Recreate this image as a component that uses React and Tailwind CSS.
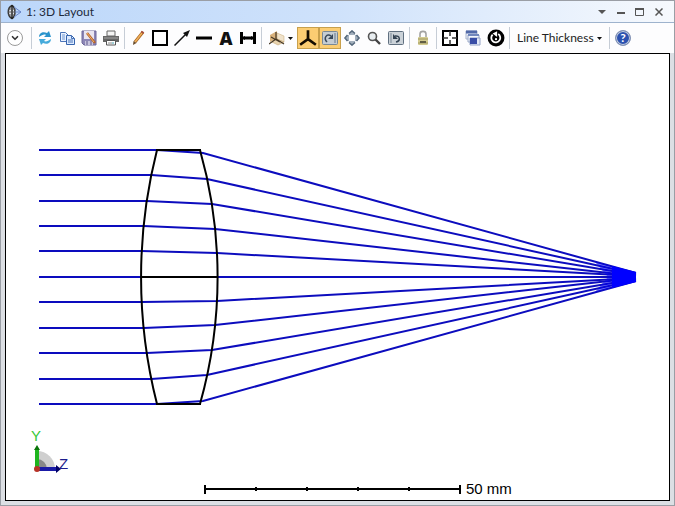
import { ChevronDown } from 'lucide-react';

const FONT = "font-['Lato','Open_Sans',sans-serif]";

const CENTER_Y = 277;

// height at the front surface, exit point on the back surface, height at the image plane
const rays = [
  { y: 150, exit: [203, 153], end: 273 },
  { y: 175, exit: [207, 179], end: 274 },
  { y: 201, exit: [212, 204], end: 275 },
  { y: 226, exit: [215, 229], end: 276 },
  { y: 251, exit: [217, 253], end: 276 },
  { y: 277, exit: [218, 277], end: 277 },
  { y: 302, exit: [217, 301], end: 278 },
  { y: 328, exit: [215, 325], end: 278 },
  { y: 353, exit: [212, 350], end: 279 },
  { y: 379, exit: [207, 375], end: 280 },
  { y: 404, exit: [203, 401], end: 281 },
];

const frontX = (y) => 141 + 16 * ((y - CENTER_Y) / 127) ** 2;

const Icon = ({ children, size = 'size-4' }) => (
  <svg viewBox="0 0 16 16" className={`${size} shrink-0`} fill="none" aria-hidden="true">
    {children}
  </svg>
);

const LensIcon = () => (
  <Icon>
    <path d="M5 1.500C0 4 0 12 5 14.500C9 12 9 4 5 1.500Z" fill="#e2e6ee" stroke="#333" strokeWidth="1.500" />
    <path d="M5 1V15" stroke="#222" strokeWidth="1.500" />
    <path d="M1 5H8M1 8H8M1 11H8" stroke="#555" />
    <path d="M7 3L14 8L7 13M8 8H14" stroke="#6a86c8" />
  </Icon>
);

const RefreshIcon = () => (
  <Icon>
    <path d="M2 7C2 3 6 1 10 3L12 1L14 7L7 7L9 5C7 4 5 5 2 7Z" fill="#2a93cc" />
    <path d="M14 9C14 13 10 15 6 13L4 15L2 9L9 9L7 11C9 12 11 11 14 9Z" fill="#45aadb" />
  </Icon>
);

const CopyIcon = () => (
  <Icon>
    <path d="M1.500 2.500H6.500L9.500 5.500V11.500H1.500Z" fill="#eaf2ff" stroke="#4b74b8" />
    <path d="M3 5H6M3 7H6M3 9H6" stroke="#6f95d0" />
    <path d="M7.500 5.500H12.500L15.500 8.500V14.500H7.500Z" fill="#dceaff" stroke="#3563ad" />
    <path d="M12.500 5.500V8.500H15.500M9 10H14M9 12H14" stroke="#4b74b8" />
  </Icon>
);

const SaveIcon = () => (
  <Icon>
    <path d="M1 1H15V15H3L1 13Z" fill="#8c86b6" stroke="#6d6799" />
    <path d="M3 1H13V9H3Z" fill="#e9e5f0" />
    <path d="M4 11H12V15H4Z" fill="#c8c4dd" />
    <path d="M6 11V15M10 11V15" stroke="#5b5588" />
    <path d="M6 3L14 13" stroke="#b5642d" strokeWidth="2.500" />
    <path d="M6 3L13 12" stroke="#f0b266" />
  </Icon>
);

const PrintIcon = () => (
  <Icon>
    <path d="M4 1H12V6H4Z" fill="#f4f4f4" stroke="#666" />
    <path d="M0 6H16V12H0Z" fill="#666" />
    <path d="M1 8H15" stroke="#a5a5a5" />
    <path d="M3.500 10.500H12.500V15H3.500Z" fill="#fff" stroke="#555" />
    <path d="M5 13H9" stroke="#888" />
    <path d="M9 13H11" stroke="#3f9fb0" />
  </Icon>
);

const PencilIcon = () => (
  <Icon>
    <path d="M5 12L13 2" stroke="#a8641f" strokeWidth="3" />
    <path d="M5 12L12 3" stroke="#efb15c" strokeWidth="1.500" />
    <path d="M12 3L13 1.500" stroke="#a9503e" strokeWidth="3" />
    <path d="M3 15L3.500 11L6.500 13Z" fill="#6b5030" />
  </Icon>
);

const RectIcon = () => (
  <Icon>
    <path d="M1 1H15V15H1Z" fill="#fff" stroke="#000" strokeWidth="2" />
  </Icon>
);

const ArrowIcon = () => (
  <Icon>
    <path d="M0.500 15.500L12 4" stroke="#111" strokeWidth="1.500" />
    <path d="M16 0L9 3L13 7Z" fill="#111" />
  </Icon>
);

const LineIcon = () => (
  <Icon>
    <path d="M0 8H16" stroke="#000" strokeWidth="3" />
  </Icon>
);

const DimensionIcon = () => (
  <Icon>
    <path d="M1.500 2V14M14.500 2V14" stroke="#000" strokeWidth="3" />
    <path d="M1 8H15" stroke="#000" strokeWidth="3" />
    <path d="M2 8L5 6V10ZM14 8L11 6V10Z" fill="#000" />
  </Icon>
);

const OrientIcon = () => (
  <Icon>
    <path d="M1 5L8 1V9L1 12Z" fill="#d9b27c" />
    <path d="M8 3L15 6V12L8 9Z" fill="#efe2cb" stroke="#c7a670" strokeWidth="0.500" />
    <path d="M3 12L8 9L15 12L9 15Z" fill="#e9d4af" stroke="#bc9a62" strokeWidth="0.500" />
    <path d="M7 2V9L0 14M7 9L15 14M2 7L11 12" stroke="#453826" strokeWidth="1.200" />
  </Icon>
);

const TripodIcon = () => (
  <Icon size="size-[18px]">
    <path d="M8 1V9L1 14M8 9L15 14" stroke="#160d00" strokeWidth="2.400" />
  </Icon>
);

const RotateViewIcon = () => (
  <Icon>
    <rect x="0.500" y="1.500" width="15" height="13" rx="1" fill="#c5ccd2" stroke="#798895" />
    <path d="M5 12C1 8 5 3 9 6" stroke="#39485a" strokeWidth="1.500" />
    <path d="M11 4V9H6Z" fill="#39485a" />
    <path d="M13 3V13" stroke="#667688" />
  </Icon>
);

const MoveIcon = () => (
  <Icon>
    <path
      d="M8 0L11 3V5H5V3ZM8 16L5 13V11H11V13ZM0 8L3 5H5V11H3ZM16 8L13 11H11V5H13Z"
      fill="#a3b0bd"
    />
    <path d="M5 3.500L8 1L11 3.500M5 12.500L8 15L11 12.500M3.500 5L1 8L3.500 11M12.500 5L15 8L12.500 11" stroke="#56697c" strokeWidth="1.500" />
    <path d="M6 6H10V10H6Z" fill="#fff" />
  </Icon>
);

const ZoomIcon = () => (
  <Icon>
    <circle cx="6.500" cy="6.500" r="4" fill="#e8edf0" stroke="#555" strokeWidth="1.600" />
    <path d="M9.500 9.500L14 14" stroke="#444" strokeWidth="2.400" />
  </Icon>
);

const UndoViewIcon = () => (
  <Icon>
    <rect x="0.500" y="1.500" width="15" height="13" rx="1" fill="#cbd2d8" stroke="#607080" />
    <path d="M8 12C13 11 12 5 7 6" stroke="#344454" strokeWidth="1.500" />
    <path d="M5 4V9H10Z" fill="#344454" />
    <path d="M3 3V13" stroke="#7b8997" />
  </Icon>
);

const LockIcon = () => (
  <Icon>
    <path d="M5 8V4C5 0.500 11 0.500 11 4V8" stroke="#a3a3a3" strokeWidth="1.600" />
    <rect x="3" y="7" width="10" height="8" rx="1" fill="#d3cb90" />
    <path d="M3 9H13M3 13H13" stroke="#a29a62" />
    <path d="M5 11H11V13H5Z" fill="#615e45" />
  </Icon>
);

const FitIcon = () => (
  <Icon>
    <path d="M1 1H15V15H1Z" fill="#fff" stroke="#000" strokeWidth="2" />
    <path d="M8 1V6M8 10V15M1 8H6M10 8H15" stroke="#333" strokeWidth="1.500" />
  </Icon>
);

const WindowsIcon = () => (
  <Icon>
    <path d="M1 1H12V9H1Z" fill="#edf1fa" stroke="#a7b3cc" />
    <path d="M1 2H12" stroke="#5068a8" strokeWidth="3" />
    <path d="M3 5H14V12H3Z" fill="#f2f5fc" stroke="#98a7c7" />
    <path d="M3 5H14" stroke="#7187bd" strokeWidth="2" />
    <path d="M5 8H15V15H5Z" fill="#e3e9f8" stroke="#93a2c6" />
    <path d="M5 8H12V14H5Z" fill="#394da6" />
  </Icon>
);

const ResetIcon = () => (
  <Icon size="size-[18px]">
    <circle cx="8" cy="8" r="7.500" fill="#000" />
    <path d="M10 4.500A4 4 0 1 1 5 5" stroke="#fff" strokeWidth="1.600" />
    <path d="M9 2L9 7L5 4Z" fill="#fff" />
    <circle cx="8" cy="9" r="1" fill="#fff" />
  </Icon>
);

const Caret = () => (
  <svg viewBox="0 0 5 3" className="h-[3px] w-[5px] shrink-0" aria-hidden="true">
    <path d="M0 0H5L2.500 3Z" fill="#111" />
  </svg>
);

const ToolButton = ({ label, active = false, children }) => (
  <button
    type="button"
    aria-label={label}
    aria-pressed={active || undefined}
    className={`flex h-[22px] w-[22px] shrink-0 items-center justify-center ${
      active ? 'border border-[#c8a04c] bg-[#fccd72]' : ''
    }`}
  >
    {children}
  </button>
);

const Separator = () => <div className="mx-0.5 h-[22px] w-px shrink-0 bg-[#c6cdd6]" />;

const TitleBar = () => (
  <header className="flex h-[22px] shrink-0 items-center justify-between border-b border-[#9eb3cd] bg-linear-to-r from-[#bcd7fa] via-[#cfe2fb] to-[#f6f9fd] pr-1.5 pl-1.5">
    <div className="flex items-center gap-[3px]">
      <LensIcon />
      <h1 className="text-xs leading-4 text-[#1e2a3c]">1: 3D Layout</h1>
    </div>
    <div className="flex items-center text-[#555]">
      <button type="button" aria-label="Window menu" className="flex w-[19px] justify-center">
        <svg viewBox="0 0 8 4" className="h-1 w-2">
          <path d="M0 0H8L4 4Z" fill="currentColor" />
        </svg>
      </button>
      <button type="button" aria-label="Minimize" className="flex w-[19px] justify-center">
        <svg viewBox="0 0 8 8" className="size-2">
          <path d="M0 5H8" stroke="currentColor" strokeWidth="2" />
        </svg>
      </button>
      <button type="button" aria-label="Maximize" className="flex w-[19px] justify-center">
        <svg viewBox="0 0 9 8" className="h-2 w-[9px]" fill="none">
          <path d="M0.500 1V7.500H8.500V1" stroke="currentColor" />
          <path d="M0 1H9" stroke="currentColor" strokeWidth="2" />
        </svg>
      </button>
      <button type="button" aria-label="Close" className="flex w-[19px] justify-center">
        <svg viewBox="0 0 8 8" className="size-2">
          <path d="M0.500 0.500L7.500 7.500M7.500 0.500L0.500 7.500" stroke="currentColor" strokeWidth="1.500" />
        </svg>
      </button>
    </div>
  </header>
);

const Toolbar = () => (
  <div role="toolbar" aria-label="Layout tools" className="flex h-[30px] shrink-0 items-center bg-[#fdfdfe] pl-[3px]">
    <button type="button" aria-label="Settings" className="mr-[3px] flex h-[22px] w-[22px] shrink-0 items-center justify-center">
      <span className="flex size-4 items-center justify-center rounded-full border border-[#9a9a9a] bg-white">
        <ChevronDown className="size-2.5 text-[#333]" strokeWidth={4} />
      </span>
    </button>
    <Separator />
    <ToolButton label="Update"><RefreshIcon /></ToolButton>
    <ToolButton label="Copy"><CopyIcon /></ToolButton>
    <ToolButton label="Save as"><SaveIcon /></ToolButton>
    <ToolButton label="Print"><PrintIcon /></ToolButton>
    <Separator />
    <ToolButton label="Annotate"><PencilIcon /></ToolButton>
    <ToolButton label="Rectangle"><RectIcon /></ToolButton>
    <ToolButton label="Arrow"><ArrowIcon /></ToolButton>
    <ToolButton label="Line"><LineIcon /></ToolButton>
    <ToolButton label="Text">
      <span className="font-['Open_Sans',sans-serif] text-lg leading-4 font-extrabold text-[#111]">A</span>
    </ToolButton>
    <ToolButton label="Dimension"><DimensionIcon /></ToolButton>
    <Separator />
    <button type="button" aria-label="Orientation" className="flex h-[22px] w-[33px] shrink-0 items-center gap-[3px] pl-[5px]">
      <OrientIcon />
      <Caret />
    </button>
    <ToolButton label="Show axes" active><TripodIcon /></ToolButton>
    <ToolButton label="Rotate" active><RotateViewIcon /></ToolButton>
    <ToolButton label="Pan"><MoveIcon /></ToolButton>
    <ToolButton label="Zoom"><ZoomIcon /></ToolButton>
    <ToolButton label="Undo view"><UndoViewIcon /></ToolButton>
    <Separator />
    <ToolButton label="Lock window"><LockIcon /></ToolButton>
    <Separator />
    <div className="flex gap-px">
      <ToolButton label="Fit"><FitIcon /></ToolButton>
      <ToolButton label="Clone window"><WindowsIcon /></ToolButton>
      <ToolButton label="Reset"><ResetIcon /></ToolButton>
    </div>
    <Separator />
    <button type="button" className="flex h-[22px] w-[95px] shrink-0 items-center justify-between px-[5px] text-xs leading-4 whitespace-nowrap text-[#222]">
      Line Thickness
      <Caret />
    </button>
    <Separator />
    <ToolButton label="Help">
      <span className="flex size-4 items-center justify-center rounded-full border border-[#8796b5] bg-[#2c52b0] text-xs leading-3 font-bold text-white ring-1 ring-[#c9d0dd] ring-inset">
        ?
      </span>
    </ToolButton>
  </div>
);

const LensDiagram = () => (
  <svg
    viewBox="6 54 663 446"
    className="h-full w-full font-['Liberation_Sans',Arial,sans-serif]"
    fill="none"
    role="img"
    aria-label="Lens cross section with traced rays"
  >
    {/* Rays */}
    <g stroke="#0c0cbe" strokeWidth="2">
      {rays.map((ray) => (
        <polyline
          key={ray.y}
          points={`39,${ray.y} ${frontX(ray.y)},${ray.y} ${ray.exit[0]},${ray.exit[1]} 636,${ray.end}`}
        />
      ))}
    </g>
    <path d="M595 262L636 272V282L595 292L608 277Z" fill="#0000f0" opacity="0.500" />
    <path d="M612 266L636 272V282L612 288Z" fill="#0000ff" />

    {/* Lens */}
    <g stroke="#000" strokeWidth="2">
      <path d="M157 150A514 514 0 0 0 157 404" />
      <path d="M200 150A467 467 0 0 1 200 404" />
      <path d="M156 150H201M156 404H201M141 277H218" />
    </g>

    {/* Axis triad */}
    <path d="M37 451A18 18 0 0 1 55 469H37Z" fill="#cfcfcf" />
    <path d="M37 459A10 10 0 0 1 47 469H37Z" fill="#888" />
    <path d="M37 469V449" stroke="#1fb51f" strokeWidth="4" />
    <path d="M37 445L40 450H34Z" fill="#087508" />
    <path d="M37 469H57" stroke="#1a1aa6" strokeWidth="4" />
    <path d="M61 469L56 465V473Z" fill="#000066" />
    <circle cx="37" cy="469" r="3" fill="#b83226" />
    <text x="31" y="441" fontSize="15" fill="#38c838">Y</text>
    <text x="59" y="469" fontSize="15" fill="#1c1c8c">Z</text>

    {/* Scale bar */}
    <path d="M205 489H460" stroke="#000" strokeWidth="2" />
    <path d="M205 485V494M460 485V494M256 487V491M307 487V491M358 487V491M409 487V491" stroke="#000" strokeWidth="2" />
    <text x="466" y="494" fontSize="15" fill="#000">50 mm</text>
  </svg>
);

export default function App() {
  return (
    <div className={`flex h-screen flex-col overflow-hidden border border-[#9a9ea5] bg-[#dcdfe4] ${FONT}`}>
      <TitleBar />
      <Toolbar />
      <main className="min-h-0 flex-1 px-1">
        <div className="h-full border border-black bg-white">
          <LensDiagram />
        </div>
      </main>
      <footer className="h-1 shrink-0" />
    </div>
  );
}
